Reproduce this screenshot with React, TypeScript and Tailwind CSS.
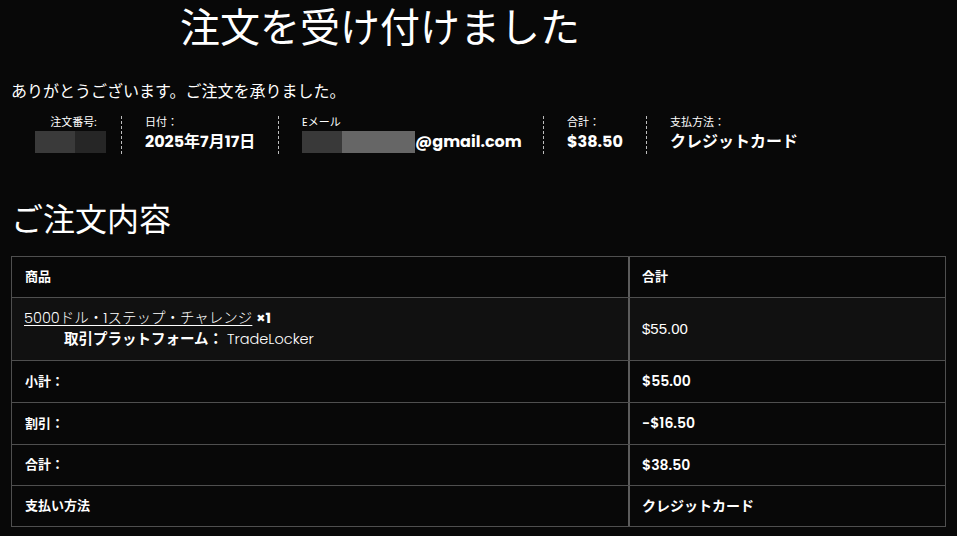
const sans = "font-['Poppins','Noto_Sans','Noto_Sans_CJK_JP',sans-serif]"
const table = "font-['Liberation_Sans','Noto_Sans_CJK_JP',sans-serif]"

type Summary = {
  label: string
  value: React.ReactNode
  className?: string
}

function Redacted({ parts }: { parts: { w: string; c: string }[] }) {
  return (
    <span className="flex h-[22px]">
      {parts.map((p, i) => (
        <span key={i} className={[p.w, p.c, 'h-full'].join(' ')} />
      ))}
    </span>
  )
}

const summary: Summary[] = [
  {
    label: '注文番号:',
    className: 'w-[87px] pr-[15px] items-center',
    value: (
      <Redacted
        parts={[
          { w: 'w-[40px]', c: 'bg-[#3a3a3a]' },
          { w: 'w-[31px]', c: 'bg-[#262626]' },
        ]}
      />
    ),
  },
  { label: '日付：', value: '2025年7月17日', className: 'w-[157px] pl-[23px]' },
  {
    label: 'Eメール',
    className: 'w-[265px] pl-[23px]',
    value: (
      <span className="flex items-center">
        <Redacted
          parts={[
            { w: 'w-[40px]', c: 'bg-[#393939]' },
            { w: 'w-[73px]', c: 'bg-[#666666]' },
          ]}
        />
        <span>@gmail.com</span>
      </span>
    ),
  },
  { label: '合計：', value: '$38.50', className: 'w-[103px] pl-[23px]' },
  { label: '支払方法：', value: 'クレジットカード', className: 'pl-[23px]' },
]

const totals = [
  { label: '小計：', value: '$55.00', h: 'h-[42px]' },
  { label: '割引：', value: '-$16.50', h: 'h-[42px]' },
  { label: '合計：', value: '$38.50', h: 'h-[41px]' },
  { label: '支払い方法', value: 'クレジットカード', h: 'h-[40px]' },
]

export default function App() {
  return (
    <div className={`h-[536px] w-full overflow-hidden bg-[#080808] text-white ${sans}`}>
      <h1 className="pl-[180px] pt-[5px] text-[40px] leading-[46px] font-normal">
        注文を受け付けました
      </h1>

      <p className="mt-[30px] pl-[11px] text-[16px] leading-[22px]">
        ありがとうございます。ご注文を承りました。
      </p>

      <ul className="mt-[13px] ml-[35px] flex">
        {summary.map((item, i) => (
          <li
            key={item.label}
            className={[
              'flex h-[38px] shrink-0 flex-col',
              i < summary.length - 1 ? 'border-r border-dashed border-[#bdbdbd]' : '',
              item.className ?? '',
            ].join(' ')}
          >
            <span className={['text-[11px] leading-[12px]', i === 0 ? 'pl-[6px]' : ''].join(' ')}>
              {item.label}
            </span>
            <span className="mt-[3px] text-[16px] leading-[22px] font-bold whitespace-nowrap">
              {item.value}
            </span>
          </li>
        ))}
      </ul>

      <h2 className="mt-[46px] pl-[11px] text-[32px] leading-[40px] font-normal">ご注文内容</h2>

      <div className={`mt-[16px] ml-[11px] w-[935px] border border-[#4f4f4f] text-[14px] ${table}`}>
        <div className="flex h-[41px] border-b border-[#4f4f4f]">
          <div className="flex w-[616px] items-center pl-[13px] text-[13px] font-bold">商品</div>
          <div className="flex flex-1 items-center border-l-2 border-[#5c5c5c] pl-[12px] text-[13px] font-bold">
            合計
          </div>
        </div>

        <div className="flex h-[63px] border-b border-[#4f4f4f] bg-[#111111]">
          <div className={`flex w-[616px] flex-col justify-center pl-[12px] ${sans}`}>
            <p className="text-[14.5px] leading-[21px] font-light">
              <span className="underline underline-offset-2">5000ドル・1ステップ・チャレンジ</span>{' '}
              <strong className="font-bold">×1</strong>
            </p>
            <p className="pl-[40px] text-[14.5px] leading-[21px]">
              <strong className="font-bold">取引プラットフォーム：</strong>{' '}
              <span className="font-light">TradeLocker</span>
            </p>
          </div>
          <div className="flex flex-1 items-center border-l-2 border-[#5c5c5c] pl-[12px] text-[15px]">
            $55.00
          </div>
        </div>

        {totals.map((row, i) => (
          <div
            key={row.label}
            className={[
              'flex font-bold',
              row.h,
              i < totals.length - 1 ? 'border-b border-[#4f4f4f]' : '',
            ].join(' ')}
          >
            <div className="flex w-[616px] items-center pl-[13px] text-[13px]">{row.label}</div>
            <div
              className={`flex flex-1 items-center border-l-2 border-[#5c5c5c] pl-[12px] font-semibold ${sans}`}
            >
              {row.value}
            </div>
          </div>
        ))}
      </div>
    </div>
  )
}
